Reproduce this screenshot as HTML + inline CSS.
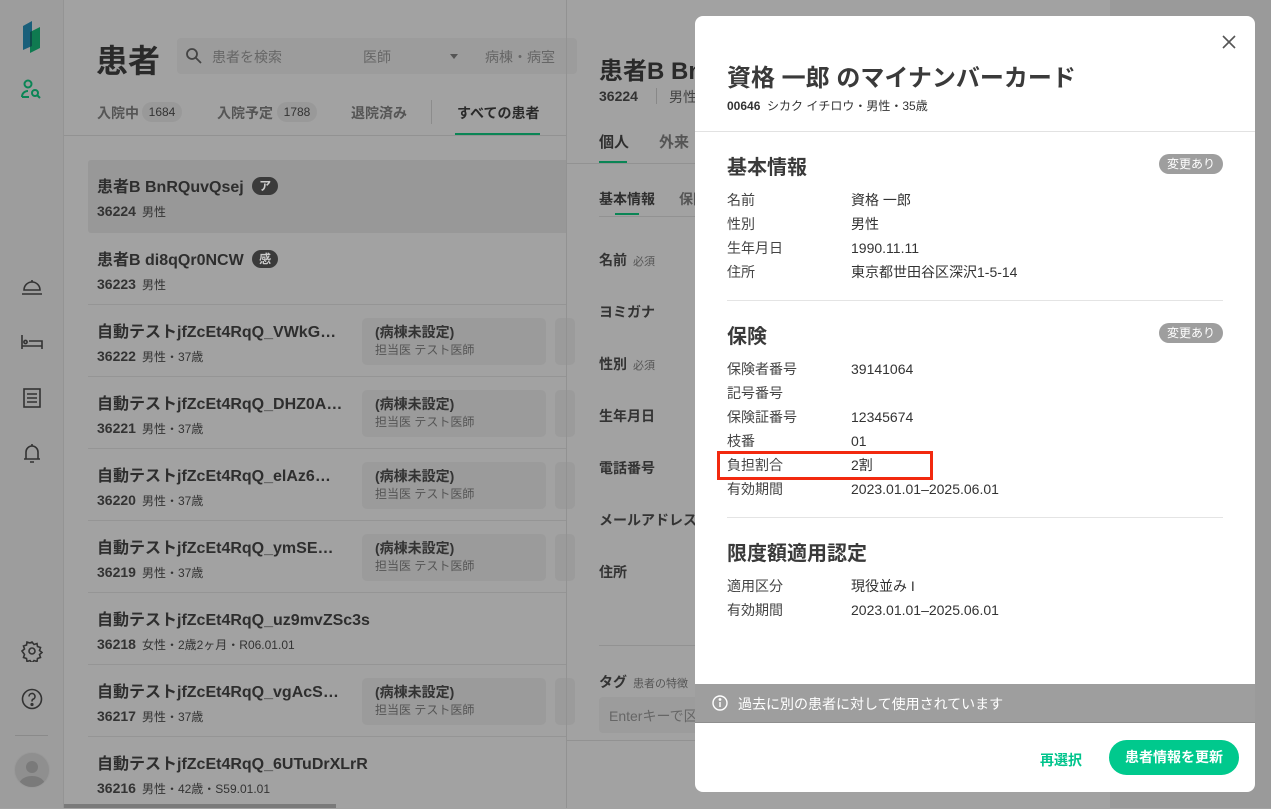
<!DOCTYPE html>
<html><head><meta charset="utf-8"><style>
*{box-sizing:border-box;margin:0;padding:0}
body{width:1271px;height:808px;overflow:hidden;position:relative;background:#a2a2a2;font-family:"Liberation Sans","Noto Sans CJK JP",sans-serif;color:#2e2e2e}
.a{position:absolute;white-space:nowrap}
.b{font-weight:bold}
.row .n{position:absolute;left:97px;top:13px;font-size:16px;font-weight:bold;color:#2e2e2e;white-space:nowrap}
.row .m{position:absolute;left:97px;top:43px;font-size:12px;color:#333;white-space:nowrap}
.row .m b{font-size:14px;margin-right:6px}
.row{position:absolute;left:0;width:566px;height:72px}
.row .ln{position:absolute;left:88px;right:0;bottom:0;height:1px;background:#959595}
.card{position:absolute;left:362px;top:13px;width:184px;height:47px;background:#9b9b9b;border-radius:5px;padding:5px 13px;font-size:14px;font-weight:bold;color:#333;line-height:18px;white-space:nowrap}
.card span{display:block;font-size:12px;font-weight:normal;color:#555}
.card2{position:absolute;left:555px;top:13px;width:20px;height:47px;background:#9b9b9b;border-radius:5px}
.lbl{position:absolute;left:599px;font-size:14px;font-weight:bold;color:#333;white-space:nowrap}
.lbl small{font-size:11px;font-weight:normal;color:#555;margin-left:6px}
.modal{position:absolute;left:695px;top:16px;width:560px;height:776px;background:#fff;border-radius:8px;overflow:hidden;color:#333}
.kv{position:absolute;left:32px;width:400px;font-size:14px;color:#444;line-height:24px;white-space:nowrap}
.kv .v{position:absolute;left:124px;top:0;color:#333;white-space:nowrap}
.sec{position:absolute;left:32px;font-size:20px;font-weight:bold;color:#3a3a3a;white-space:nowrap}
.chip{position:absolute;right:32px;width:64px;height:20px;border-radius:10px;background:#9e9e9e;color:#fff;font-size:12px;text-align:center;line-height:20px}
.hr{position:absolute;left:32px;right:32px;height:1px;background:#e4e4e4}
</style></head><body>
<!-- sidebar -->
<div class="a" style="left:0;top:0;width:64px;height:808px;background:#9d9d9d;border-right:1px solid #949494"></div>
<svg class="a" style="left:20px;top:20px" width="24" height="34"><polygon points="3,6 12,1 12,26 3,30" fill="#1a5f7a"/><polygon points="10,12 20,7 20,28 10,33" fill="#0f7a50"/><polygon points="10,12 12,11 12,26 10,27" fill="#0d4d4a"/></svg>
<svg class="a" style="left:20px;top:78px" width="24" height="22" fill="none" stroke="#0a8555" stroke-width="2"><circle cx="8" cy="6" r="3.5"/><path d="M2 19c0-4 3-6 6-6"/><path d="M2 19h7"/><circle cx="15" cy="15" r="3"/><path d="M17 17l3 3"/></svg>
<svg class="a" style="left:20px;top:277px" width="24" height="20" fill="none" stroke="#333" stroke-width="1.6"><path d="M4 13a8 8 0 0 1 16 0z"/><path d="M2 17h20"/><path d="M12 3v2"/></svg>
<svg class="a" style="left:20px;top:333px" width="24" height="18" fill="none" stroke="#333" stroke-width="1.6"><path d="M2 2v14M2 13h20M22 8v8M9 8h13v5"/><circle cx="5.5" cy="9" r="1.6"/></svg>
<svg class="a" style="left:22px;top:387px" width="20" height="22" fill="none" stroke="#333" stroke-width="1.6"><rect x="2" y="2" width="16" height="18"/><path d="M5 7h10M5 11h10M5 15h10"/></svg>
<svg class="a" style="left:22px;top:442px" width="20" height="24" fill="none" stroke="#333" stroke-width="1.6"><path d="M4 17V10a6 6 0 0 1 12 0v7zM2 17h16M8 20h4M10 2v2"/></svg>
<svg class="a" style="left:21px;top:640px" width="22" height="22" fill="none" stroke="#333" stroke-width="1.6"><circle cx="11" cy="11" r="3"/><path d="M11 2l2 2.5 3-1 .5 3 3 1-1 3 2.5 2-2.5 2 1 3-3 1-.5 3-3-1-2 2.5-2-2.5-3 1-.5-3-3-1 1-3L1 11l2.5-2-1-3 3-1 .5-3 3 1z"/></svg>
<svg class="a" style="left:21px;top:688px" width="22" height="22" fill="none" stroke="#333" stroke-width="1.6"><circle cx="11" cy="11" r="9.5"/><path d="M8 8.5a3 3 0 1 1 4 2.8c-1 .4-1 1-1 2.2"/><circle cx="11" cy="16.5" r=".8" fill="#333"/></svg>
<div class="a" style="left:15px;top:735px;width:33px;height:1px;background:#8a8a8a"></div>
<div class="a" style="left:14px;top:752px;width:36px;height:36px;border-radius:50%;background:#8f8f8f;overflow:hidden;border:1px solid #999"><div class="a" style="left:11px;top:8px;width:12px;height:12px;border-radius:50%;background:#7a7a7a"></div><div class="a" style="left:4px;top:23px;width:26px;height:18px;border-radius:50%;background:#7a7a7a"></div></div>
<!-- list panel -->
<div class="a b" style="left:96px;top:36px;font-size:32px;color:#2a2a2a">患者</div>
<div class="a" style="left:177px;top:38px;width:400px;height:36px;background:#9c9c9c;border-radius:4px"></div>
<svg class="a" style="left:185px;top:47px" width="18" height="18" fill="none" stroke="#444" stroke-width="1.8"><circle cx="7" cy="7" r="5"/><path d="M11 11l5 5"/></svg>
<div class="a" style="left:212px;top:47px;font-size:14px;color:#666">患者を検索</div>
<div class="a" style="left:363px;top:47px;font-size:14px;color:#666">医師</div>
<div class="a" style="left:450px;top:54px;border:4px solid transparent;border-top:5px solid #555"></div>
<div class="a" style="left:485px;top:47px;font-size:14px;color:#666">病棟・病室</div>
<div class="a" style="left:97px;top:103px;font-size:14px;font-weight:bold;color:#555">入院中</div>
<div class="a" style="left:142px;top:102px;width:40px;height:20px;border-radius:10px;background:#999;font-size:12px;text-align:center;line-height:20px;color:#333">1684</div>
<div class="a" style="left:217px;top:103px;font-size:14px;font-weight:bold;color:#555">入院予定</div>
<div class="a" style="left:277px;top:102px;width:40px;height:20px;border-radius:10px;background:#999;font-size:12px;text-align:center;line-height:20px;color:#333">1788</div>
<div class="a" style="left:351px;top:103px;font-size:14px;font-weight:bold;color:#555">退院済み</div>
<div class="a" style="left:431px;top:100px;width:1px;height:24px;background:#8c8c8c"></div>
<div class="a" style="left:457px;top:103px;font-size:14px;font-weight:bold;color:#2a2a2a">すべての患者</div>
<div class="a" style="left:455px;top:133px;width:85px;height:3px;background:#0a8555"></div>
<div class="a" style="left:64px;top:135px;width:502px;height:1px;background:#929292"></div>

<div class="row" style="top:160px"><div class="a" style="left:88px;top:0;width:478px;height:73px;background:#989898;border-radius:3px 0 0 3px"></div><div class="n">患者B BnRQuvQsej <span style="display:inline-block;background:#3a3a3a;color:#ccc;font-size:12px;border-radius:10px;padding:0 7px;line-height:18px;vertical-align:2px;margin-left:4px">ア</span></div><div class="m"><b>36224</b>男性</div></div>
<div class="row" style="top:233px"><div class="n">患者B di8qQr0NCW <span style="display:inline-block;background:#3a3a3a;color:#ccc;font-size:12px;border-radius:10px;padding:0 7px;line-height:18px;vertical-align:2px;margin-left:4px">感</span></div><div class="m"><b>36223</b>男性</div><div class="ln"></div></div>
<div class="row" style="top:305px"><div class="n">自動テストjfZcEt4RqQ_VWkG…</div><div class="m"><b>36222</b>男性・37歳</div><div class="card">(病棟未設定)<span>担当医 テスト医師</span></div><div class="card2"></div><div class="ln"></div></div>
<div class="row" style="top:377px"><div class="n">自動テストjfZcEt4RqQ_DHZ0A…</div><div class="m"><b>36221</b>男性・37歳</div><div class="card">(病棟未設定)<span>担当医 テスト医師</span></div><div class="card2"></div><div class="ln"></div></div>
<div class="row" style="top:449px"><div class="n">自動テストjfZcEt4RqQ_elAz6…</div><div class="m"><b>36220</b>男性・37歳</div><div class="card">(病棟未設定)<span>担当医 テスト医師</span></div><div class="card2"></div><div class="ln"></div></div>
<div class="row" style="top:521px"><div class="n">自動テストjfZcEt4RqQ_ymSE…</div><div class="m"><b>36219</b>男性・37歳</div><div class="card">(病棟未設定)<span>担当医 テスト医師</span></div><div class="card2"></div><div class="ln"></div></div>
<div class="row" style="top:593px"><div class="n">自動テストjfZcEt4RqQ_uz9mvZSc3s</div><div class="m"><b>36218</b>女性・2歳2ヶ月・R06.01.01</div><div class="ln"></div></div>
<div class="row" style="top:665px"><div class="n">自動テストjfZcEt4RqQ_vgAcS…</div><div class="m"><b>36217</b>男性・37歳</div><div class="card">(病棟未設定)<span>担当医 テスト医師</span></div><div class="card2"></div><div class="ln"></div></div>
<div class="row" style="top:737px"><div class="n">自動テストjfZcEt4RqQ_6UTuDrXLrR</div><div class="m"><b>36216</b>男性・42歳・S59.01.01</div></div>
<div class="a" style="left:64px;top:804px;width:272px;height:4px;background:#7a7a7a"></div>
<!-- detail panel -->
<div class="a" style="left:566px;top:0;width:1px;height:808px;background:#929292"></div>
<div class="a" style="left:1110px;top:0;width:161px;height:808px;background:#9a9a9a"></div>
<div class="a b" style="left:599px;top:51px;font-size:24px;color:#2a2a2a">患者B BnRQuvQsej</div>
<div class="a b" style="left:599px;top:88px;font-size:14px;color:#333">36224</div>
<div class="a" style="left:656px;top:88px;width:1px;height:16px;background:#888"></div>
<div class="a" style="left:669px;top:87px;font-size:14px;color:#444">男性</div>
<div class="a b" style="left:599px;top:131px;font-size:15px">個人</div>
<div class="a b" style="left:659px;top:131px;font-size:15px;color:#555">外来</div>
<div class="a" style="left:599px;top:161px;width:28px;height:2px;background:#0a8555"></div>
<div class="a" style="left:567px;top:163px;width:130px;height:1px;background:#929292"></div>
<div class="a b" style="left:599px;top:189px;font-size:14px">基本情報</div>
<div class="a b" style="left:679px;top:189px;font-size:14px;color:#555">保険</div>
<div class="a" style="left:615px;top:213px;width:24px;height:2px;background:#0a8555"></div>
<div class="a" style="left:599px;top:216px;width:100px;height:1px;background:#929292"></div>
<div class="lbl" style="top:250px">名前<small>必須</small></div>
<div class="lbl" style="top:302px">ヨミガナ</div>
<div class="lbl" style="top:354px">性別<small>必須</small></div>
<div class="lbl" style="top:406px">生年月日</div>
<div class="lbl" style="top:458px">電話番号</div>
<div class="lbl" style="top:510px">メールアドレス</div>
<div class="lbl" style="top:562px">住所</div>
<div class="a" style="left:599px;top:645px;width:100px;height:1px;background:#929292"></div>
<div class="lbl" style="top:672px">タグ<small>患者の特徴</small></div>
<div class="a" style="left:599px;top:697px;width:100px;height:36px;background:#9c9c9c;border-radius:4px;padding:9px 10px;font-size:14px;color:#666">Enterキーで区</div>
<div class="a" style="left:567px;top:740px;width:130px;height:1px;background:#929292"></div>
<!-- modal -->
<div class="modal">
<svg class="a" style="left:527px;top:19px" width="14" height="14" stroke="#555" stroke-width="1.6"><path d="M1 1l12 12M13 1L1 13"/></svg>
<div class="a b" style="left:32px;top:42px;font-size:24px;color:#3a3a3a">資格 一郎 のマイナンバーカード</div>
<div class="a" style="left:32px;top:81px;font-size:12px;color:#333"><b>00646</b>&nbsp; シカク イチロウ・男性・35歳</div>
<div class="a" style="left:0;top:115px;width:560px;height:1px;background:#e2e2e2"></div>
<div class="sec" style="top:135px">基本情報</div><div class="chip" style="top:138px">変更あり</div>
<div class="kv" style="top:172px">名前<span class="v">資格 一郎</span></div>
<div class="kv" style="top:196px">性別<span class="v">男性</span></div>
<div class="kv" style="top:220px">生年月日<span class="v">1990.11.11</span></div>
<div class="kv" style="top:244px">住所<span class="v">東京都世田谷区深沢1-5-14</span></div>
<div class="hr" style="top:284px"></div>
<div class="sec" style="top:304px">保険</div><div class="chip" style="top:307px">変更あり</div>
<div class="kv" style="top:341px">保険者番号<span class="v">39141064</span></div>
<div class="kv" style="top:365px">記号番号</div>
<div class="kv" style="top:389px">保険証番号<span class="v">12345674</span></div>
<div class="kv" style="top:413px">枝番<span class="v">01</span></div>
<div class="kv" style="top:437px">負担割合<span class="v">2割</span></div>
<div class="a" style="left:22px;top:435px;width:216px;height:29px;border:3px solid #f2290f"></div>
<div class="kv" style="top:461px">有効期間<span class="v">2023.01.01–2025.06.01</span></div>
<div class="hr" style="top:501px"></div>
<div class="sec" style="top:521px">限度額適用認定</div>
<div class="kv" style="top:558px">適用区分<span class="v">現役並み I</span></div>
<div class="kv" style="top:582px">有効期間<span class="v">2023.01.01–2025.06.01</span></div>
<div class="a" style="left:0;top:668px;width:560px;height:39px;background:#9e9e9e;border-bottom:1px solid #8e8e8e"></div>
<svg class="a" style="left:17px;top:679px" width="16" height="16" fill="none" stroke="#fff" stroke-width="1.4"><circle cx="8" cy="8" r="7"/><path d="M8 7v5"/><circle cx="8" cy="4.5" r=".7" fill="#fff"/></svg>
<div class="a" style="left:43px;top:678px;font-size:14px;color:#fff">過去に別の患者に対して使用されています</div>
<div class="a b" style="left:345px;top:734px;font-size:14px;color:#00c48c">再選択</div>
<div class="a b" style="left:414px;top:724px;width:130px;height:35px;border-radius:18px;background:#00c98d;color:#fff;font-size:14px;text-align:center;line-height:35px">患者情報を更新</div>
</div>
</body></html>
